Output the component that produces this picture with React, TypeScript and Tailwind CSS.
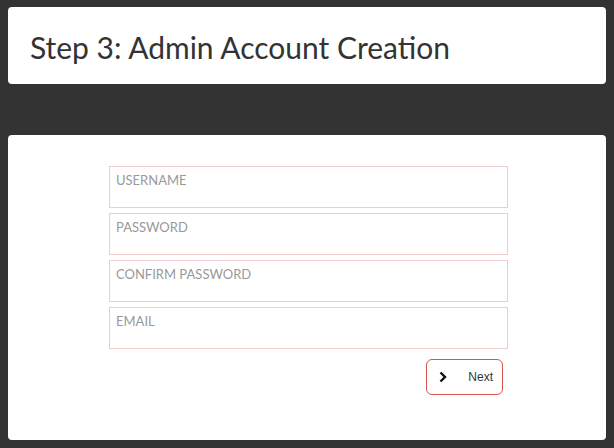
import React from "react";

const fields = ["USERNAME", "PASSWORD", "CONFIRM PASSWORD", "EMAIL"];

export default function App() {
  return (
    <div className="w-[614px] h-[448px] bg-[#333333] px-[8px] pt-[7px] pb-[8px] flex flex-col" style={{ fontFamily: "Lato, sans-serif" }}>
      <div className="h-[77px] bg-white rounded-[4px] flex items-center px-[22px]">
        <h1 className="text-[30px] leading-none text-[#333333] pt-[2px]" style={{ fontFamily: "Lato, sans-serif" }}>
          Step 3: Admin Account Creation
        </h1>
      </div>
      <div className="mt-[51px] flex-1 bg-white rounded-[4px] pt-[31px] flex flex-col items-center">
        <div className="w-[399px] ml-[3px] flex flex-col gap-[5px]">
          {fields.map((f) => (
            <div key={f} className="h-[42px] border border-[#f0cccc] px-[6px] pt-[7px]">
              <span className="text-[13px] leading-none text-[#999999] block">{f}</span>
            </div>
          ))}
          <div className="flex justify-end pr-[5px] mt-[5px]">
            <button className="w-[77px] h-[36px] border border-[#d9534f] rounded-[6px] flex items-center pl-[10px] pr-[9px] justify-between bg-white">
              <svg width="10" height="12" viewBox="0 0 10 12" className="ml-[1px]">
                <path d="M2.5 1.5 L7 6 L2.5 10.5" fill="none" stroke="#111" strokeWidth="2.4" />
              </svg>
              <span className="text-[12px] text-[#333] leading-none" style={{ fontFamily: "'Liberation Sans', Arial, sans-serif" }}>Next</span>
            </button>
          </div>
        </div>
      </div>
    </div>
  );
}
